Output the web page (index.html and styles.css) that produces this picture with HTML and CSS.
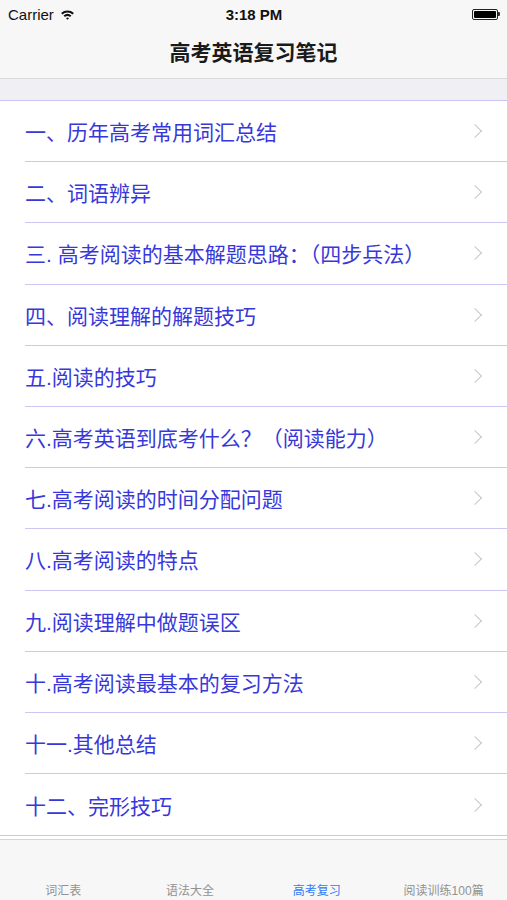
FILE: index.html
```html
<!DOCTYPE html>
<html lang="zh">

<head>
    <meta charset="UTF-8">
    <meta name="viewport" content="width=device-width, initial-scale=1.0">
    <title>高考英语复习笔记</title>
    <link rel="stylesheet" href="styles.css">
</head>

<body>
    <div class="screen">
        <div class="status-bar">
            <div class="carrier">
                Carrier
                <svg class="wifi" width="15" height="11" viewBox="0 0 14 10">
                    <path d="M1 3.6 A9 9 0 0 1 13 3.6 L11.7 5 A7 7 0 0 0 2.3 5 Z" fill="#111" />
                    <path d="M3.3 6 A5.6 5.6 0 0 1 10.7 6 L9.4 7.3 A3.8 3.8 0 0 0 4.6 7.3 Z" fill="#111" />
                    <path d="M5.6 8.4 A2.2 2.2 0 0 1 8.4 8.4 L7 9.8 Z" fill="#111" />
                </svg>
            </div>
            <div class="time">3:18 PM</div>
            <div class="battery">
                <span class="battery-body"><span class="battery-fill"></span></span>
                <span class="battery-tip"></span>
            </div>
        </div>

        <div class="nav-bar">
            <h1>高考英语复习笔记</h1>
        </div>

        <div class="spacer"></div>

        <ul class="list">
            <li><span>一、历年高考常用词汇总结</span><i class="chevron"></i></li>
            <li><span>二、词语辨异</span><i class="chevron"></i></li>
            <li><span>三. 高考阅读的基本解题思路：（四步兵法）</span><i class="chevron"></i></li>
            <li><span>四、阅读理解的解题技巧</span><i class="chevron"></i></li>
            <li><span>五.阅读的技巧</span><i class="chevron"></i></li>
            <li><span>六.高考英语到底考什么？（阅读能力）</span><i class="chevron"></i></li>
            <li><span>七.高考阅读的时间分配问题</span><i class="chevron"></i></li>
            <li><span>八.高考阅读的特点</span><i class="chevron"></i></li>
            <li><span>九.阅读理解中做题误区</span><i class="chevron"></i></li>
            <li><span>十.高考阅读最基本的复习方法</span><i class="chevron"></i></li>
            <li><span>十一.其他总结</span><i class="chevron"></i></li>
            <li><span>十二、完形技巧</span><i class="chevron"></i></li>
        </ul>

        <div class="tab-bar">
            <div class="tab">词汇表</div>
            <div class="tab">语法大全</div>
            <div class="tab active">高考复习</div>
            <div class="tab">阅读训练100篇</div>
        </div>
    </div>
</body>

</html>
```

FILE: styles.css
```css
* {
    box-sizing: border-box;
}

body {
    margin: 0;
    font-family: "Liberation Sans", "Noto Sans CJK SC", sans-serif;
    background: #ffffff;
}

.screen {
    width: 507px;
    height: 900px;
    overflow: hidden;
    display: flex;
    flex-direction: column;
}

.status-bar {
    height: 28px;
    background: #f7f7f7;
    display: flex;
    align-items: center;
    justify-content: space-between;
    padding: 0 7px 0 8px;
    font-size: 15px;
    color: #111;
}

.carrier {
    display: flex;
    align-items: center;
    gap: 6px;
    width: 90px;
}

.time {
    font-weight: bold;
}

.battery {
    width: 90px;
    display: flex;
    justify-content: flex-end;
    align-items: center;
}

.battery-body {
    width: 26px;
    height: 11px;
    border: 1px solid #222;
    border-radius: 2px;
    padding: 1px;
    display: flex;
}

.battery-fill {
    flex: 1;
    background: #000;
    border-radius: 1px;
}

.battery-tip {
    width: 2px;
    height: 4px;
    background: #333;
    border-radius: 0 1px 1px 0;
}

.nav-bar {
    height: 51px;
    background: #f7f7f7;
    border-bottom: 1px solid #d9d9dd;
    display: flex;
    align-items: center;
    justify-content: center;
}

.nav-bar h1 {
    margin: 0;
    font-size: 21px;
    font-weight: 600;
    color: #1a1a1a;
    padding-bottom: 5px;
}

.spacer {
    height: 22px;
    background: #efeff4;
    border-bottom: 1px solid #c9c5f3;
}

.list {
    list-style: none;
    margin: 0;
    padding: 0 0 0 25px;
    background: #ffffff;
    border-bottom: 1px solid #c9c5f3;
}

.list li {
    height: 61.2px;
    border-bottom: 1px solid #ccc8f4;
    display: flex;
    align-items: center;
    justify-content: space-between;
    padding-right: 27px;
    font-size: 21px;
    color: #3838da;
}

.list li:last-child {
    border-bottom: none;
}

.chevron {
    width: 10px;
    height: 10px;
    border-top: 1.6px solid #c7c7cc;
    border-right: 1.6px solid #c7c7cc;
    transform: rotate(45deg);
}

.tab-bar {
    flex: 1;
    margin-top: 3px;
    background: #f7f7f7;
    border-top: 1px solid #d6d6da;
    display: grid;
    grid-template-columns: repeat(4, 1fr);
    align-items: end;
    padding-bottom: 2px;
}

.tab {
    text-align: center;
    font-size: 12px;
    color: #929292;
}

.tab.active {
    color: #2f7cf6;
}
```
